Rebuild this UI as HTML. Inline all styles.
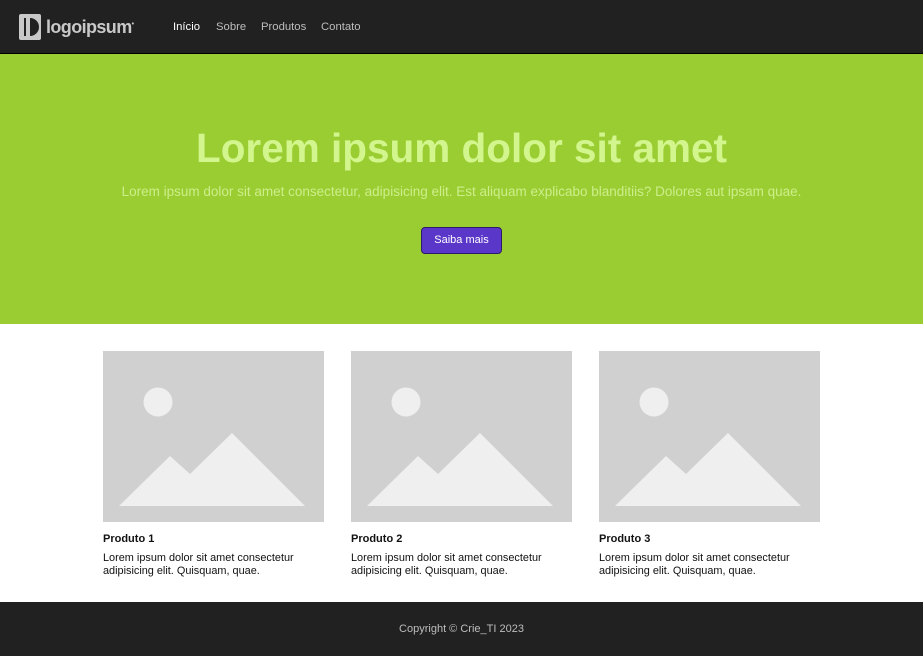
<!DOCTYPE html>
<html><head><meta charset="utf-8"><style>
*{margin:0;padding:0;box-sizing:border-box}
body{width:923px;height:656px;font-family:"Liberation Sans",sans-serif;background:#fff;overflow:hidden;position:relative}
header{position:absolute;left:0;top:0;width:923px;height:54px;background:#212121;border-bottom:1px solid #000}
.logo{position:absolute;left:19px;top:14px;display:flex;align-items:center}
.logo span{color:#c8c8c8;font-weight:bold;font-size:18px;margin-left:5px;letter-spacing:-0.6px}
nav{position:absolute;left:173px;top:21px;font-size:11.3px;color:#c8c8c8;white-space:nowrap}
nav a{position:absolute;color:#bdbdbd}
nav a.a{color:#fff}
.hero{position:absolute;left:0;top:54px;width:923px;height:270px;background:#9acd32;text-align:center}
.hero h1{position:absolute;left:0;width:923px;top:71px;font-size:40.5px;color:#d3f58e;font-weight:bold}
.hero p{position:absolute;left:0;width:923px;top:130px;font-size:13.5px;color:#cdee8a}
.btn{position:absolute;left:421px;top:173px;width:81px;height:27px;background:#5b37c9;border:1px solid #2e1a6a;border-radius:4px;color:#fff;font-size:11px;line-height:25px}
.card{position:absolute;top:351px;width:221px}
.card svg{display:block}
.card h3{font-size:11px;margin-top:11px;color:#111}
.card p{font-size:10.9px;margin-top:7px;line-height:13px;color:#111}
footer{position:absolute;left:0;top:602px;width:923px;height:54px;background:#212121;color:#bdbdbd;font-size:11px;text-align:center;line-height:54px}
</style></head><body>
<header>
<div class="logo"><svg width="22" height="26" viewBox="0 0 22 26"><rect x="0" y="0" width="22" height="26" rx="2" fill="#c8c8c8"/><path d="M11 4 A9 9 0 0 1 11 22 Z" fill="#212121"/><rect x="5" y="4" width="2" height="18" fill="#212121"/></svg><span>logoipsum<sup style="font-size:7px">•</sup></span></div>
<nav><a class="a" style="left:0">Início</a><a style="left:43px">Sobre</a><a style="left:88px">Produtos</a><a style="left:148px">Contato</a></nav>
</header>
<div class="hero">
<h1>Lorem ipsum dolor sit amet</h1>
<p>Lorem ipsum dolor sit amet consectetur, adipisicing elit. Est aliquam explicabo blanditiis? Dolores aut ipsam quae.</p>
<div class="btn">Saiba mais</div>
</div>
<div class="card" style="left:103px"><svg width="221" height="171"><rect width="221" height="171" fill="#d0d0d0"/><circle cx="55" cy="51" r="14.5" fill="#efefef"/><path d="M16 155 L67 105 L87 123 L129 82 L202 155Z" fill="#efefef"/></svg><h3>Produto 1</h3><p>Lorem ipsum dolor sit amet consectetur adipisicing elit. Quisquam, quae.</p></div>
<div class="card" style="left:351px"><svg width="221" height="171"><rect width="221" height="171" fill="#d0d0d0"/><circle cx="55" cy="51" r="14.5" fill="#efefef"/><path d="M16 155 L67 105 L87 123 L129 82 L202 155Z" fill="#efefef"/></svg><h3>Produto 2</h3><p>Lorem ipsum dolor sit amet consectetur adipisicing elit. Quisquam, quae.</p></div>
<div class="card" style="left:599px"><svg width="221" height="171"><rect width="221" height="171" fill="#d0d0d0"/><circle cx="55" cy="51" r="14.5" fill="#efefef"/><path d="M16 155 L67 105 L87 123 L129 82 L202 155Z" fill="#efefef"/></svg><h3>Produto 3</h3><p>Lorem ipsum dolor sit amet consectetur adipisicing elit. Quisquam, quae.</p></div>
<footer>Copyright © Crie_TI 2023</footer>
</body></html>
